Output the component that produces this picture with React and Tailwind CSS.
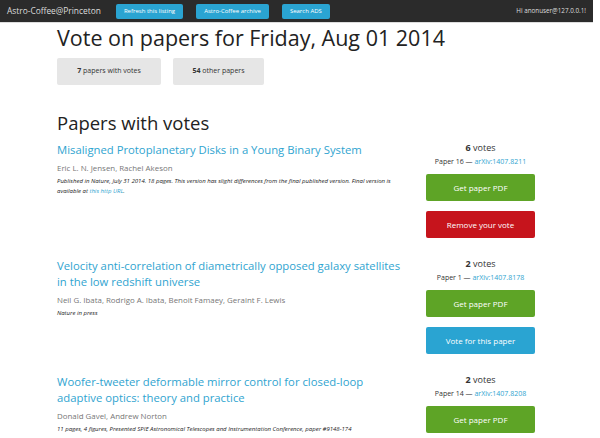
const papers = [
  {
    title: "Misaligned Protoplanetary Disks in a Young Binary System",
    authors: "Eric L. N. Jensen, Rachel Akeson",
    comment: (
      <>
        Published in Nature, July 31 2014. 18 pages. This version has slight differences from the final published version. Final version is
        available at <a className="text-[#2fa4d0]">this http URL</a>.
      </>
    ),
    votes: 6,
    number: 16,
    arxiv: "1407.8211",
    voted: true,
  },
  {
    title: "Velocity anti-correlation of diametrically opposed galaxy satellites in the low redshift universe",
    authors: "Neil G. Ibata, Rodrigo A. Ibata, Benoit Famaey, Geraint F. Lewis",
    comment: "Nature in press",
    votes: 2,
    number: 1,
    arxiv: "1407.8178",
    voted: false,
  },
  {
    title: "Woofer-tweeter deformable mirror control for closed-loop adaptive optics: theory and practice",
    authors: "Donald Gavel, Andrew Norton",
    comment: "11 pages, 4 figures, Presented SPIE Astronomical Telescopes and Instrumentation Conference, paper #9148-174",
    votes: 2,
    number: 14,
    arxiv: "1407.8208",
    voted: false,
  },
];

function NavButton({ children }) {
  return (
    <button className="h-[15px] rounded-[2px] bg-[#2aa4d2] px-[8px] text-[6px] leading-[15px] text-white">
      {children}
    </button>
  );
}

function PaperRow({ paper }) {
  return (
    <div className="flex">
      <div className="w-[350px] pt-[1px]">
        <h3 className="text-[11.3px] leading-[16px] text-[#2fa4d0]">{paper.title}</h3>
        <p className="mt-[4px] text-[7.9px] leading-[12px] text-[#777]">{paper.authors}</p>
        <p className="mt-[3px] text-[6px] italic leading-[9.5px] text-[#222]">{paper.comment}</p>
      </div>
      <div className="ml-[19px] flex w-[109px] flex-col items-center">
        <p className="text-[9px] leading-[14px] text-[#333]">
          <span className="font-bold">{paper.votes}</span> votes
        </p>
        <p className="text-[7px] leading-[14px] text-[#333]">
          Paper {paper.number} — <a className="text-[#2fa4d0]">arXiv:{paper.arxiv}</a>
        </p>
        <button className="mt-[5px] h-[27px] w-full rounded-[2px] bg-[#5ea426] text-[8px] text-white">
          Get paper PDF
        </button>
        {paper.voted ? (
          <button className="mt-[10px] h-[27px] w-full rounded-[2px] bg-[#c6141c] text-[8px] text-white">
            Remove your vote
          </button>
        ) : (
          <button className="mt-[10px] h-[27px] w-full rounded-[2px] bg-[#2aa4d2] text-[8px] text-white">
            Vote for this paper
          </button>
        )}
      </div>
    </div>
  );
}

export default function App() {
  return (
    <div className="h-[438px] w-[593px] overflow-hidden bg-white font-['Open_Sans',sans-serif] text-[#333]">
      <nav className="flex h-[23px] items-center border-b border-[#ddd] bg-[#2b2b2b] pl-[7px] pr-[7px]">
        <span className="text-[8.4px] text-[#ddd]">Astro-Coffee@Princeton</span>
        <div className="ml-[15px] flex gap-[13px]">
          <NavButton>Refresh this listing</NavButton>
          <NavButton>Astro-Coffee archive</NavButton>
          <NavButton>Search ADS</NavButton>
        </div>
        <span className="ml-auto text-[6.3px] text-[#ddd]">Hi anonuser@127.0.0.1!</span>
      </nav>

      <main className="pl-[57px]">
        <h1 className="mt-[1px] text-[21.5px] leading-[28px] text-[#222]">Vote on papers for Friday, Aug 01 2014</h1>
        <div className="mt-[6px] flex gap-[12px]">
          <button className="h-[27px] w-[104px] rounded-[2px] bg-[#e6e6e6] text-[7px] text-[#333]">
            <span className="font-bold">7</span> papers with votes
          </button>
          <button className="h-[27px] w-[91px] rounded-[2px] bg-[#e6e6e6] text-[7px] text-[#333]">
            <span className="font-bold">54</span> other papers
          </button>
        </div>

        <h2 className="mt-[26px] text-[18.5px] leading-[24px] text-[#222]">Papers with votes</h2>
        <div className="mt-[6px] flex flex-col gap-[19px]">
          {papers.map((paper) => (
            <PaperRow key={paper.arxiv} paper={paper} />
          ))}
        </div>
      </main>
    </div>
  );
}
